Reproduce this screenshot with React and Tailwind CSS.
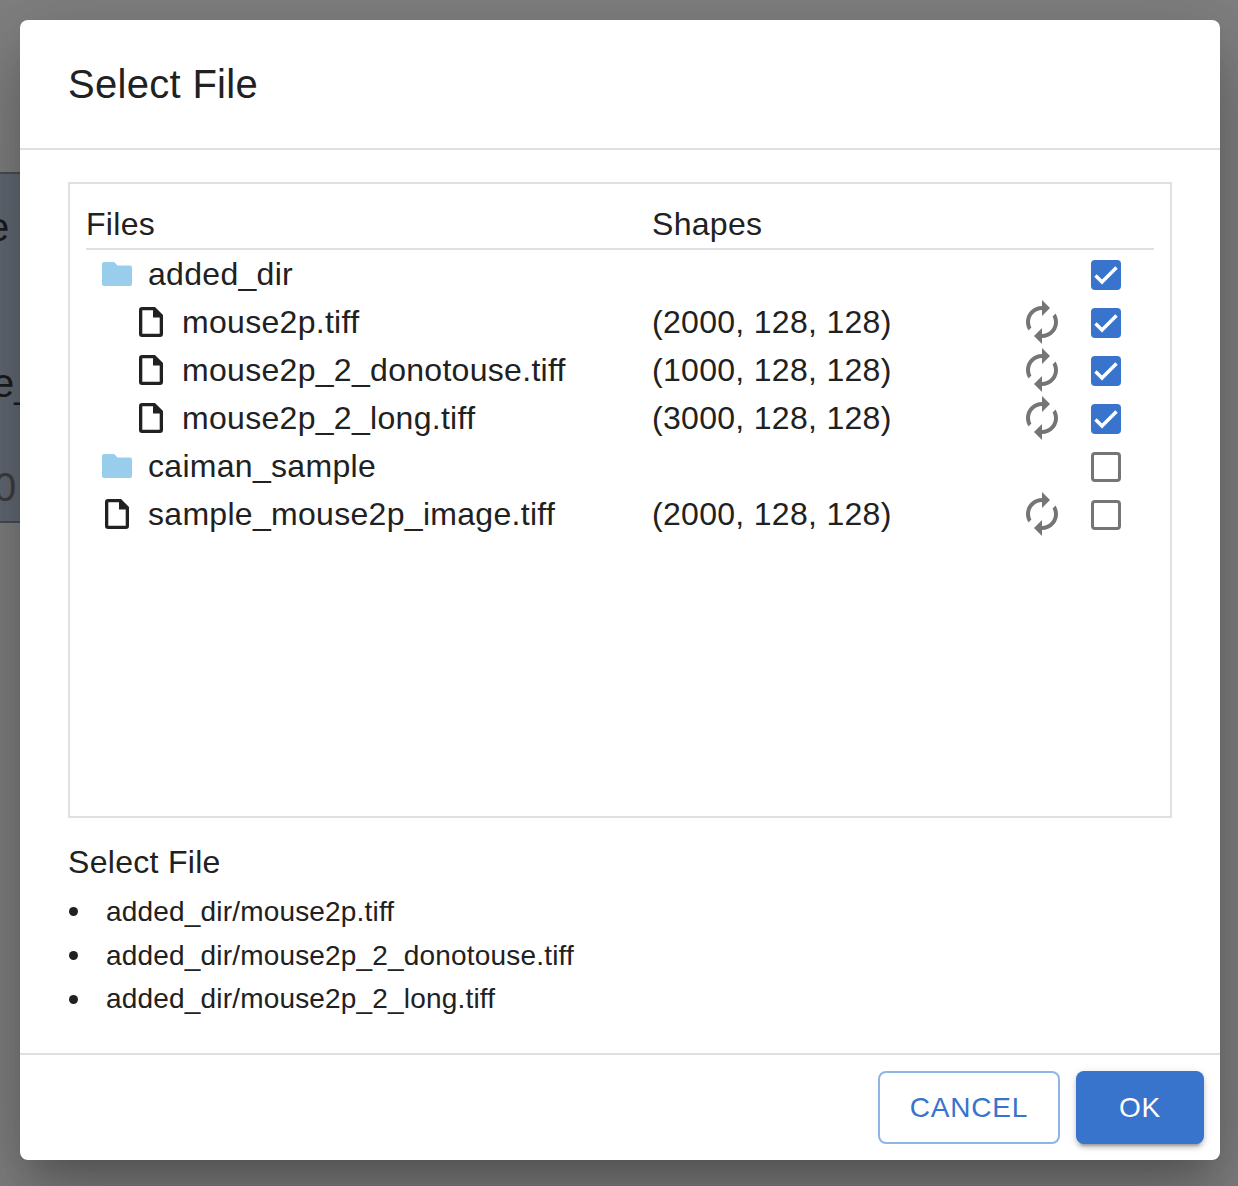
import React from "react";
import { MdAutorenew } from "react-icons/md";

const Folder = () => (
  <svg width="30" height="24" viewBox="0 0 30 24" className="text-[#98cdeb]" fill="currentColor">
    <path d="M2 0h9.2c.6 0 1.1.2 1.5.6L15.6 3.500H28a2 2 0 0 1 2 2V22a2 2 0 0 1-2 2H2a2 2 0 0 1-2-2V2a2 2 0 0 1 2-2z" />
  </svg>
);

const Doc = () => (
  <svg width="24" height="30" viewBox="0 0 24 30" className="text-[#212121]" fill="currentColor">
    <path fillRule="evenodd" d="M3 0h13l8 8v19a3 3 0 0 1-3 3H3a3 3 0 0 1-3-3V3a3 3 0 0 1 3-3zM3.300 3.300v23.400h17.400V10.500H14V3.300z" />
  </svg>
);

const Check = ({ on }) =>
  on ? (
    <span className="flex h-[30px] w-[30px] rounded-[4px] bg-[#3874cb]">
      <svg width="30" height="30" viewBox="0 0 30 30" fill="none" stroke="white" strokeWidth="3.500">
        <path d="M4.500 15.500L11 22L25.500 7.500" />
      </svg>
    </span>
  ) : (
    <span className="h-[30px] w-[30px] rounded-[4px] border-[3px] border-[#757575]" />
  );

const Row = ({ level, folder, name, shape, on }) => (
  <div className="flex h-12 items-center">
    <div className={`flex w-[566px] items-center ${level ? "pl-[49px]" : "pl-[15px]"}`}>
      <span className="flex w-8 shrink-0 justify-center">{folder ? <Folder /> : <Doc />}</span>
      <span className="ml-[15px]">{name}</span>
    </div>
    <div className="w-[366px]">{shape}</div>
    <div className="flex w-[48px] items-center justify-center">
      {shape && <MdAutorenew size={48} className="text-[#757575]" />}
    </div>
    <div className="ml-[16px] mt-[2px] flex w-[48px] items-center justify-center">
      <Check on={on} />
    </div>
  </div>
);

const rows = [
  { folder: true, name: "added_dir", on: true },
  { level: 1, name: "mouse2p.tiff", shape: "(2000, 128, 128)", on: true },
  { level: 1, name: "mouse2p_2_donotouse.tiff", shape: "(1000, 128, 128)", on: true },
  { level: 1, name: "mouse2p_2_long.tiff", shape: "(3000, 128, 128)", on: true },
  { folder: true, name: "caiman_sample", on: false },
  { name: "sample_mouse2p_image.tiff", shape: "(2000, 128, 128)", on: false },
];

const picked = ["added_dir/mouse2p.tiff", "added_dir/mouse2p_2_donotouse.tiff", "added_dir/mouse2p_2_long.tiff"];

export default function App() {
  return (
    <div className="relative h-[1186px] w-[1238px] overflow-hidden bg-[#808080] font-['Liberation_Sans',Arial,sans-serif] text-[#212121]">
      <div className="pt-[172px]">
        <div className="relative h-[351px] w-[20px] overflow-hidden border-y-2 border-[#4a4d52] bg-[#636a74] text-[40px] text-[#1c1c1c]">
          <span className="absolute left-[-13px] top-[23px]">e</span>
          <span className="absolute left-[-8px] top-[179px]">e_</span>
          <span className="absolute left-[-6px] top-[283px] text-[#3e3e3e]">0</span>
        </div>
      </div>
      <div className="absolute inset-0 pl-5 pt-5">
        <div className="flex h-[1140px] w-[1200px] flex-col rounded-lg bg-white shadow-[0_22px_30px_-14px_rgba(0,0,0,0.2),0_48px_76px_6px_rgba(0,0,0,0.14),0_18px_92px_16px_rgba(0,0,0,0.12)]">
          <h2 className="h-[130px] border-b-2 border-[#e0e0e0] px-12 py-8 text-[40px] leading-[64px] tracking-[0.3px]">Select File</h2>
          <div className="flex-1 px-12 pt-8">
            <div className="h-[636px] border-2 border-[#e0e0e0] px-4 pt-4 text-[32px] tracking-[0.3px]">
              <div className="flex h-[50px] items-center border-b-2 border-[#e0e0e0]">
                <div className="w-[566px]">Files</div>
                <div>Shapes</div>
              </div>
              {rows.map((r) => (
                <Row key={r.name} {...r} />
              ))}
            </div>
            <div className="mt-[19px] text-[32px] leading-[50px] tracking-[0.3px]">Select File</div>
            <ul className="mt-[3px] text-[28px] leading-[43.7px] tracking-[0.18px]">
              {picked.map((p) => (
                <li key={p} className="flex items-center">
                  <span className="ml-px mr-[28px] h-[9px] w-[9px] shrink-0 rounded-full bg-[#212121]" />
                  {p}
                </li>
              ))}
            </ul>
          </div>
          <div className="flex justify-end gap-4 border-t-2 border-[#e0e0e0] p-4 text-[28px] tracking-[0.8px]">
            <button className="h-[73px] w-[182px] rounded-lg border-2 border-[#8fb4e6] text-[#3874cb]">CANCEL</button>
            <button className="h-[73px] w-[128px] rounded-lg bg-[#3874cb] text-white shadow-[0_6px_2px_-4px_rgba(0,0,0,0.2),0_4px_4px_0_rgba(0,0,0,0.14),0_2px_10px_0_rgba(0,0,0,0.12)]">OK</button>
          </div>
        </div>
      </div>
    </div>
  );
}
